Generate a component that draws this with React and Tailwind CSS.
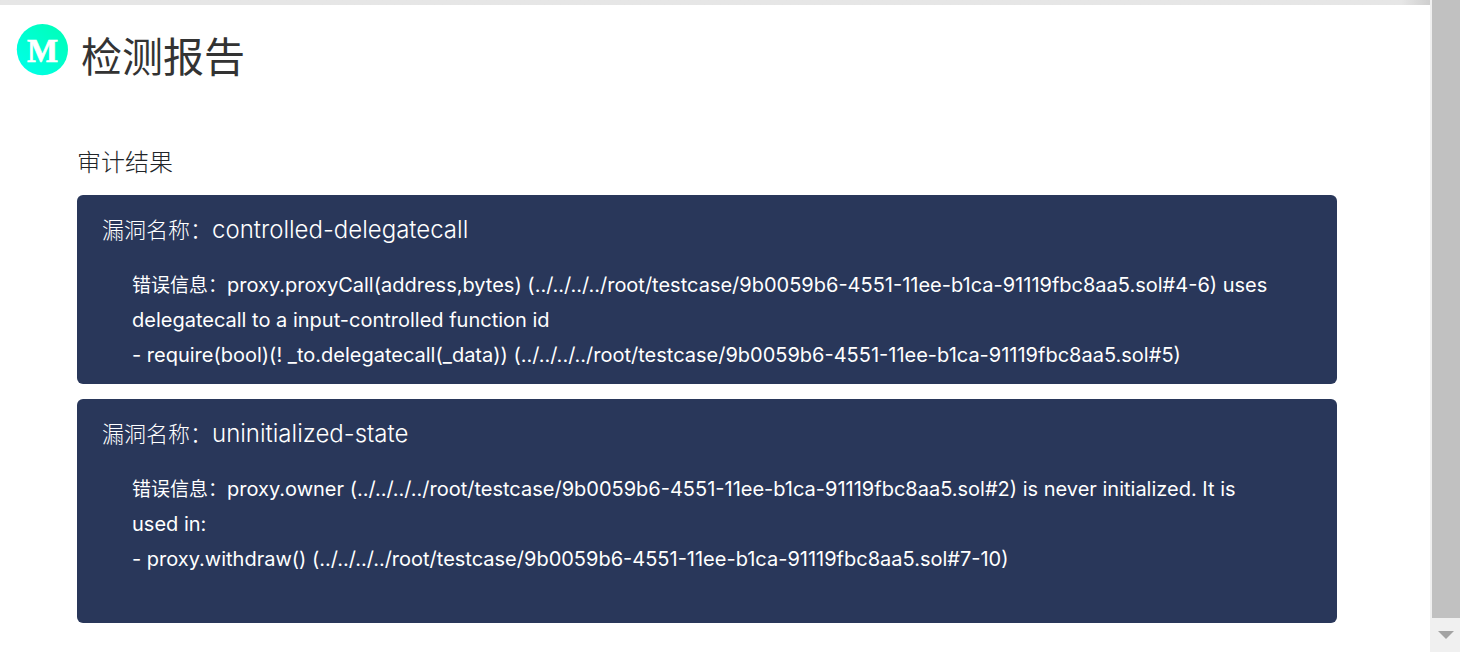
const findings = [
  {
    name: 'controlled-delegatecall',
    lines: [
      'proxy.proxyCall(address,bytes) (../../../../root/testcase/9b0059b6-4551-11ee-b1ca-91119fbc8aa5.sol#4-6) uses delegatecall to a input-controlled function id',
      '- require(bool)(! _to.delegatecall(_data)) (../../../../root/testcase/9b0059b6-4551-11ee-b1ca-91119fbc8aa5.sol#5)',
    ],
  },
  {
    name: 'uninitialized-state',
    lines: [
      'proxy.owner (../../../../root/testcase/9b0059b6-4551-11ee-b1ca-91119fbc8aa5.sol#2) is never initialized. It is used in:',
      '- proxy.withdraw() (../../../../root/testcase/9b0059b6-4551-11ee-b1ca-91119fbc8aa5.sol#7-10)',
      '',
    ],
  },
];

function Logo() {
  return (
    <svg viewBox="0 0 52 52" className="size-[52px] shrink-0" role="img" aria-label="M">
      <defs>
        <linearGradient id="logo-fill" x1="0" y1="1" x2="1" y2="0">
          <stop offset="0" stopColor="#00ffec" />
          <stop offset="1" stopColor="#00ffb4" />
        </linearGradient>
      </defs>
      <circle cx="26.4" cy="25.6" r="25.6" fill="url(#logo-fill)" />
      <text
        x="26.5"
        y="37.5"
        textAnchor="middle"
        fontSize="33"
        fontWeight="700"
        fill="#fff"
        stroke="#fff"
        strokeWidth="0.6"
        className="font-['Liberation_Serif',serif]"
      >
        M
      </text>
    </svg>
  );
}

function Finding({ name, lines }) {
  return (
    <article className="rounded-md bg-[#29375a] px-[25px] pt-[15px] pb-[11px] text-white">
      <h3 className="text-2xl leading-10 font-light">
        <span className="font-['Noto_Sans_CJK_SC',sans-serif] text-[22px] leading-5">漏洞名称：</span>
        <span>{name}</span>
      </h3>
      <div className="mt-[18px] px-[30px] text-xl leading-[35px]">
        {lines.map((line, i) => (
          <p key={i} className="min-h-[35px]">
            {i === 0 && (
              <span className="font-['Noto_Sans_CJK_SC',sans-serif] text-[19px] leading-5">错误信息：</span>
            )}
            {line}
          </p>
        ))}
      </div>
    </article>
  );
}

export default function App() {
  return (
    <div className="flex min-h-screen bg-white font-[Inter,'Noto_Sans_CJK_SC',sans-serif]">
      <div className="min-w-0 flex-1">
        <div className="h-[5px] bg-linear-to-r from-[#e6e6e6] from-98% to-[#cfcfcf]" />
        <header className="flex items-start gap-[13px] px-4 pt-[19px]">
          <Logo />
          <h1 className="pt-[7px] text-[41px] leading-[52px] text-[#333]">检测报告</h1>
        </header>
        <main className="pt-[62px] pr-[93px] pl-[77px]">
          <h2 className="text-2xl leading-9 font-light text-[#212529]">审计结果</h2>
          <div className="mt-[14px] flex flex-col gap-[15px]">
            {findings.map((f) => (
              <Finding key={f.name} {...f} />
            ))}
          </div>
        </main>
      </div>
      <div className="flex w-[30px] shrink-0 flex-col bg-[#f0f0f0] pl-[2px]" aria-hidden="true">
        <div className="flex-1 bg-[#c1c1c1]" />
        <div className="flex h-[34px] items-center justify-center">
          <svg viewBox="0 0 16 8" className="h-2 w-4">
            <path d="M0 0H16L8 8Z" fill="#a3a3a3" />
          </svg>
        </div>
      </div>
    </div>
  );
}
